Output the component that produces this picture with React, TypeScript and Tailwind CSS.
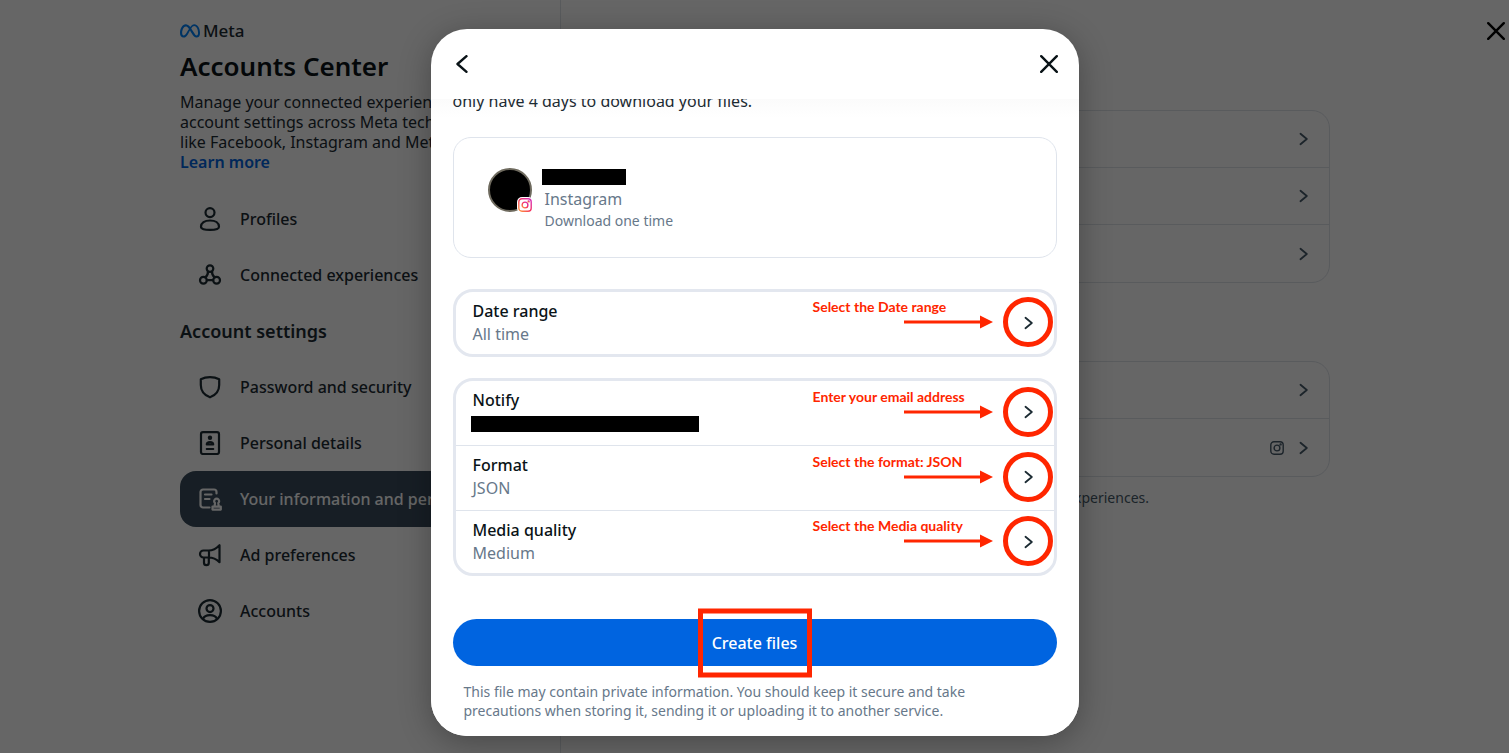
import type { ReactNode } from "react";
import { FaMeta } from "react-icons/fa6";

const chevron = (
  <svg viewBox="0 0 9 14" className="h-[14px] w-[9px]" fill="none" stroke="currentColor" strokeWidth="1.8" strokeLinecap="round" strokeLinejoin="round" aria-hidden="true">
    <path d="M1.5 1.8 7.8 7l-6.300 5.200" />
  </svg>
);

function CloseIcon() {
  return (
    <svg viewBox="0 0 18 18" className="size-[18px]" fill="none" stroke="currentColor" strokeWidth="2.4" strokeLinecap="round" aria-hidden="true">
      <path d="M1.2 1.2l15.6 15.6M16.8 1.2 1.2 16.8" />
    </svg>
  );
}

function Icon({ children }: { children: ReactNode }) {
  return (
    <svg viewBox="0 0 24 24" className="size-6 shrink-0" fill="none" stroke="currentColor" strokeWidth="2.2" strokeLinecap="round" strokeLinejoin="round" aria-hidden="true">
      {children}
    </svg>
  );
}

const icons = {
  profile: (
    <Icon>
      <circle cx="12" cy="5.6" r="4.5" />
      <path d="M3 19.800c0-3.900 3.600-6.300 9-6.300s9 2.400 9 6.300c0 2.300-3.600 3.100-9 3.100s-9-.8-9-3.100z" />
    </Icon>
  ),
  connected: (
    <Icon>
      <circle cx="12" cy="5.600" r="3.300" />
      <circle cx="5.400" cy="17.200" r="3.400" />
      <circle cx="18.600" cy="17.200" r="3.400" />
      <path d="M9.900 8.500c.2 2.600-.8 4.500-2.600 5.800M14.100 8.500c-.2 2.600.8 4.500 2.600 5.800M8.800 17.200h6.400" />
    </Icon>
  ),
  shield: (
    <Icon>
      <path d="M2.800 4.300C5.500 2.900 8.700 2.200 12 2.200s6.500.7 9.200 2.100V10c0 6.200-3.600 10.200-9.200 12.300C6.400 20.200 2.800 16.200 2.800 10z" />
    </Icon>
  ),
  details: (
    <Icon>
      <rect x="3" y="1.200" width="18" height="21.800" rx="2" />
      <circle cx="12" cy="6.800" r="2.200" fill="currentColor" stroke="none" />
      <path d="M8.800 13.400c0-1.600 1.400-2.400 3.200-2.400s3.200.8 3.200 2.400z" />
      <path d="M8.600 18h6.800" strokeWidth="1.800" />
    </Icon>
  ),
  information: (
    <Icon>
      <path d="M11.500 20.500H5a2.500 2.500 0 0 1-2.500-2.500V5A2.500 2.500 0 0 1 5 2.500h11A2.500 2.500 0 0 1 18.500 5v1.500M7 7.500h6.500M7 12h4.500" />
      <path d="M14.500 19.600h8.300v3h-8.300zM16.600 19.200l.4-3.200a2.500 2.500 0 1 1 3.300 0l.4 3.200" />
    </Icon>
  ),
  ads: (
    <Icon>
      <path d="M5.500 7.500h5c4 0 7.500-1.500 11-5.300v17c-3-3-6-4.700-11-4.700h-5a3.500 3.500 0 0 1 0-7zM11 7.500v7M6 14.500v5.200a2.300 2.300 0 0 0 4.800 0v-5" />
    </Icon>
  ),
  account: (
    <Icon>
      <circle cx="12" cy="12" r="10.900" />
      <circle cx="12" cy="9.600" r="3.500" />
      <path d="M5 20c1-2.700 3.700-3.800 7-3.800s6 1.100 7 3.800" />
    </Icon>
  ),
};

function NavItem({ icon, label, active }: { icon: ReactNode; label: string; active?: boolean }) {
  return (
    <a
      href="#"
      className={`flex h-14 items-center gap-[18px] rounded-2xl px-[18px] text-[16px] font-medium whitespace-nowrap ${active ? "bg-[#3a4d5c] text-white" : "text-[#1c2b33]"}`}
    >
      {icon}
      {label}
    </a>
  );
}

function InstagramGlyph({ className, stroke = "currentColor" }: { className: string; stroke?: string }) {
  return (
    <svg viewBox="0 0 14 14" className={className} fill="none" stroke={stroke} strokeWidth="1.4" aria-hidden="true">
      <defs>
        <linearGradient id="ig" x1="0" y1="1" x2="1" y2="0">
          <stop offset="0" stopColor="#ff9a3c" />
          <stop offset="0.5" stopColor="#f5315f" />
          <stop offset="1" stopColor="#d32fc0" />
        </linearGradient>
      </defs>
      <rect x="0.8" y="0.8" width="12.400" height="12.400" rx="3.200" />
      <circle cx="7" cy="7" r="2.900" />
      <circle cx="10.600" cy="3.400" r="0.500" />
    </svg>
  );
}

function PageRow({ label, instagram }: { label: string; instagram?: boolean }) {
  return (
    <a href="#" aria-label={label} className="flex h-[57px] items-center justify-end gap-[15px] border-b border-[#dee3e9] pr-[21px] text-[#465a69] last:border-b-0">
      {instagram && <InstagramGlyph className="size-[14px]" />}
      {chevron}
    </a>
  );
}

function Hint({ text }: { text: string }) {
  return (
    <span className="pointer-events-none absolute top-1/2 right-px flex -translate-y-1/2 items-center gap-[10px] pb-[2px] text-[#ff2600]">
      <span className="relative block w-[89px]">
        <span className="absolute bottom-[14px] -left-[91px] w-[180px] font-['Lato'] text-[14px] leading-4 font-bold whitespace-nowrap">{text}</span>
        <svg viewBox="0 0 89 14" className="block h-[14px] w-[89px]" aria-hidden="true">
          <path d="M0 7h78" stroke="currentColor" strokeWidth="3" />
          <path d="M76 .5 89 7l-13 6.500z" fill="currentColor" />
        </svg>
      </span>
      <span className="block size-[50px] rounded-full border-5 border-current" />
    </span>
  );
}

function Option({ label, value, hint, divider }: { label: string; value?: string; hint: string; divider?: boolean }) {
  return (
    <button
      type="button"
      className={`relative flex w-full items-center justify-between pt-2 pr-[21px] pl-[17px] text-left text-[16px] leading-[23px] ${divider ? "border-b border-[#dfe4ec] pb-[10px]" : "pb-2"}`}
    >
      <span>
        <span className="block font-medium text-[#0a1317]">{label}</span>
        {value ? (
          <span className="block text-[#67788a]">{value}</span>
        ) : (
          <span className="flex h-[23px] items-center">
            <span className="-ml-0.5 block h-4 w-[228px] bg-black" />
          </span>
        )}
      </span>
      <span className="text-[#1c2b33]">{chevron}</span>
      <Hint text={hint} />
    </button>
  );
}

export default function App() {
  return (
    <div className="relative h-screen overflow-hidden bg-white font-['Noto_Sans',sans-serif] text-[#1c2b33]">
      <div className="flex h-full">
        <aside className="w-[561px] shrink-0 border-r border-[#dee3e9] pt-[21px] pr-7 pl-[180px]">
          <div className="flex h-5 items-center gap-[3px] text-[17px] leading-5 font-medium">
            <FaMeta className="size-5 text-[#0082fb]" />
            Meta
          </div>
          <h1 className="mt-[7px] mb-2 text-[26px] leading-9 font-semibold text-[#0a1317]">Accounts Center</h1>
          <p className="text-[16px] leading-5 whitespace-nowrap">
            Manage your connected experiences and
            <br />
            account settings across Meta technologies
            <br />
            like Facebook, Instagram and Meta Horizon.
            <br />
            <a href="#" className="font-semibold text-[#0064e0]">Learn more</a>
          </p>
          <nav className="mt-[19px]">
            <NavItem icon={icons.profile} label="Profiles" />
            <NavItem icon={icons.connected} label="Connected experiences" />
            <h2 className="flex h-14 items-center text-[18px] font-semibold">Account settings</h2>
            <NavItem icon={icons.shield} label="Password and security" />
            <NavItem icon={icons.details} label="Personal details" />
            <NavItem icon={icons.information} label="Your information and permissions" active />
            <NavItem icon={icons.ads} label="Ad preferences" />
            <NavItem icon={icons.account} label="Accounts" />
          </nav>
        </aside>
        <main className="flex-1">
          <div className="mx-auto max-w-[590px] pt-[110px]">
            <div className="rounded-[18px] border border-[#dee3e9]">
              <PageRow label="Your information" />
              <PageRow label="Download your information" />
              <PageRow label="Access your information" />
            </div>
            <div className="mt-[78px] rounded-[18px] border border-[#dee3e9]">
              <PageRow label="Permissions" />
              <PageRow label="Contacts" instagram />
            </div>
            <p className="mt-[11px] pr-[181px] text-right text-[14px] leading-5 text-[#465a69]">experiences.</p>
          </div>
        </main>
      </div>

      <div className="absolute inset-0 flex items-start justify-center bg-black/60 pt-[29px]">
        <button type="button" aria-label="Close page" className="absolute top-[22px] right-1 text-black">
          <CloseIcon />
        </button>
        <section role="dialog" aria-label="Download your information" className="w-full max-w-[648px] overflow-hidden rounded-[36px] bg-white shadow-[0_6px_32px_rgba(0,0,0,0.3)]">
          <header className="flex h-[70px] items-center justify-between pr-[21px] pl-[25px] text-[#0a1317]">
            <button type="button" aria-label="Back">
              <svg viewBox="0 0 12 18" className="h-[18px] w-3" fill="none" stroke="currentColor" strokeWidth="2.400" strokeLinecap="round" strokeLinejoin="round" aria-hidden="true">
                <path d="M10.500 1.200 1.500 9l9 7.800" />
              </svg>
            </button>
            <button type="button" aria-label="Close">
              <CloseIcon />
            </button>
          </header>
          <div className="overflow-hidden bg-linear-to-b from-[#fbfbfb] via-white via-3% to-white px-[22px] pb-4">
            <p className="-mt-2 text-[16px] leading-5">only have 4 days to download your files.</p>

            <div className="mt-[26px] flex h-[121px] items-start gap-[10px] rounded-[18px] border border-[#dfe4ec] bg-white pt-[30px] pl-[34px]">
              <div className="relative size-11 rounded-full border-2 border-[#6e6a5e] bg-black">
                <span className="absolute -right-[3px] -bottom-[3px] rounded-[5px] bg-white p-px">
                  <InstagramGlyph className="size-[14px]" stroke="url(#ig)" />
                </span>
              </div>
              <div className="pt-px pl-[3px] text-[#67788a]">
                <div className="-ml-[3px] mb-[3px] h-4 w-[84px] bg-black" />
                <p className="text-[16px] leading-[22px]">Instagram</p>
                <p className="text-[14px] leading-[22px]">Download one time</p>
              </div>
            </div>

            <div className="mt-[31px] rounded-[20px] border-3 border-[#e3e7ef] bg-white">
              <Option label="Date range" value="All time" hint="Select the Date range" />
            </div>

            <div className="mt-[21px] rounded-[20px] border-3 border-[#e3e7ef] bg-white">
              <Option label="Notify" hint="Enter your email address" divider />
              <Option label="Format" value="JSON" hint="Select the format: JSON" divider />
              <Option label="Media quality" value="Medium" hint="Select the Media quality" />
            </div>

            <button type="button" className="relative mt-[43px] flex h-[47px] w-full items-center justify-center rounded-full bg-[#0064e0] text-[16px] font-medium text-white">
              Create files
              <span className="absolute top-1/2 left-1/2 h-[69px] w-[114px] -translate-x-1/2 -translate-y-1/2 border-5 border-[#ff2600]" />
            </button>

            <p className="mt-4 px-[11px] text-[14px] leading-[19px] text-[#67788a]">
              This file may contain private information. You should keep it secure and take precautions when storing it, sending it or uploading it to another service.
            </p>
          </div>
        </section>
      </div>
    </div>
  );
}
